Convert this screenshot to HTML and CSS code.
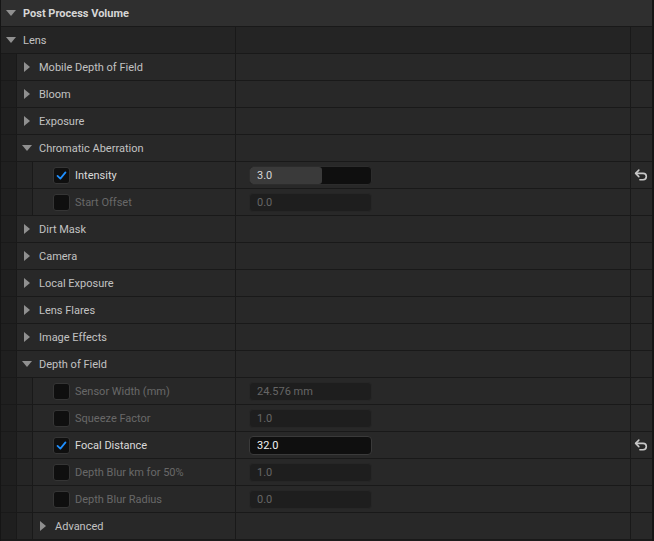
FILE: index.html
```html
<!DOCTYPE html>
<html lang="en">
<head>
    <meta charset="UTF-8">
    <title>Details - Post Process Volume</title>
    <link rel="stylesheet" href="styles.css">
</head>
<body>
<div class="panel">

    <!-- Section header -->
    <div class="row header">
        <span class="arrow down"></span>
        <span class="label">Post Process Volume</span>
    </div>

    <!-- Lens category -->
    <div class="row cat">
        <div class="name lvl0"><span class="arrow down"></span><span class="label">Lens</span></div>
        <div class="value"></div>
        <div class="reset"></div>
    </div>

    <div class="row">
        <div class="name"><span class="indent"></span><span class="group"><span class="arrow right"></span><span class="label">Mobile Depth of Field</span></span></div>
        <div class="value"></div><div class="reset"></div>
    </div>
    <div class="row">
        <div class="name"><span class="indent"></span><span class="group"><span class="arrow right"></span><span class="label">Bloom</span></span></div>
        <div class="value"></div><div class="reset"></div>
    </div>
    <div class="row">
        <div class="name"><span class="indent"></span><span class="group"><span class="arrow right"></span><span class="label">Exposure</span></span></div>
        <div class="value"></div><div class="reset"></div>
    </div>
    <div class="row">
        <div class="name"><span class="indent"></span><span class="group"><span class="arrow down"></span><span class="label">Chromatic Aberration</span></span></div>
        <div class="value"></div><div class="reset"></div>
    </div>

    <!-- Chromatic Aberration props -->
    <div class="row">
        <div class="name"><span class="indent"></span><span class="indent inner"></span>
            <span class="prop"><span class="check on"><svg viewBox="0 0 17 17"><path d="M4 9 L7.2 12 L13 5"/></svg></span><span class="label bright">Intensity</span></span></div>
        <div class="value"><div class="field"><div class="fill" style="width:72px"></div><span>3.0</span></div></div>
        <div class="reset"><svg class="undo" viewBox="0 0 14 14"><path d="M4.5 2 L1.5 5 L4.5 8"/><path d="M2 5 H8.5 A3 3 0 0 1 8.5 11 H5.5"/></svg></div>
    </div>
    <div class="row">
        <div class="name"><span class="indent"></span><span class="indent inner"></span>
            <span class="prop"><span class="check"></span><span class="label dim">Start Offset</span></span></div>
        <div class="value"><div class="field off"><span>0.0</span></div></div>
        <div class="reset"></div>
    </div>

    <div class="row">
        <div class="name"><span class="indent"></span><span class="group"><span class="arrow right"></span><span class="label">Dirt Mask</span></span></div>
        <div class="value"></div><div class="reset"></div>
    </div>
    <div class="row">
        <div class="name"><span class="indent"></span><span class="group"><span class="arrow right"></span><span class="label">Camera</span></span></div>
        <div class="value"></div><div class="reset"></div>
    </div>
    <div class="row">
        <div class="name"><span class="indent"></span><span class="group"><span class="arrow right"></span><span class="label">Local Exposure</span></span></div>
        <div class="value"></div><div class="reset"></div>
    </div>
    <div class="row">
        <div class="name"><span class="indent"></span><span class="group"><span class="arrow right"></span><span class="label">Lens Flares</span></span></div>
        <div class="value"></div><div class="reset"></div>
    </div>
    <div class="row">
        <div class="name"><span class="indent"></span><span class="group"><span class="arrow right"></span><span class="label">Image Effects</span></span></div>
        <div class="value"></div><div class="reset"></div>
    </div>
    <div class="row">
        <div class="name"><span class="indent"></span><span class="group"><span class="arrow down"></span><span class="label">Depth of Field</span></span></div>
        <div class="value"></div><div class="reset"></div>
    </div>

    <!-- Depth of Field props -->
    <div class="row">
        <div class="name"><span class="indent"></span><span class="indent inner"></span>
            <span class="prop"><span class="check"></span><span class="label dim">Sensor Width (mm)</span></span></div>
        <div class="value"><div class="field off"><span>24.576 mm</span></div></div>
        <div class="reset"></div>
    </div>
    <div class="row">
        <div class="name"><span class="indent"></span><span class="indent inner"></span>
            <span class="prop"><span class="check"></span><span class="label dim">Squeeze Factor</span></span></div>
        <div class="value"><div class="field off"><span>1.0</span></div></div>
        <div class="reset"></div>
    </div>
    <div class="row">
        <div class="name"><span class="indent"></span><span class="indent inner"></span>
            <span class="prop"><span class="check on"><svg viewBox="0 0 17 17"><path d="M4 9 L7.2 12 L13 5"/></svg></span><span class="label bright">Focal Distance</span></span></div>
        <div class="value"><div class="field edit"><span>32.0</span></div></div>
        <div class="reset"><svg class="undo" viewBox="0 0 14 14"><path d="M4.5 2 L1.5 5 L4.5 8"/><path d="M2 5 H8.5 A3 3 0 0 1 8.5 11 H5.5"/></svg></div>
    </div>
    <div class="row">
        <div class="name"><span class="indent"></span><span class="indent inner"></span>
            <span class="prop"><span class="check"></span><span class="label dim">Depth Blur km for 50%</span></span></div>
        <div class="value"><div class="field off"><span>1.0</span></div></div>
        <div class="reset"></div>
    </div>
    <div class="row">
        <div class="name"><span class="indent"></span><span class="indent inner"></span>
            <span class="prop"><span class="check"></span><span class="label dim">Depth Blur Radius</span></span></div>
        <div class="value"><div class="field off"><span>0.0</span></div></div>
        <div class="reset"></div>
    </div>
    <div class="row">
        <div class="name"><span class="indent"></span><span class="indent inner"></span>
            <span class="group"><span class="arrow right"></span><span class="label">Advanced</span></span></div>
        <div class="value"></div><div class="reset"></div>
    </div>

</div>
</body>
</html>
```

FILE: styles.css
```css
body { margin: 0; background: #151515; font-family: Roboto, "Noto Sans", sans-serif; font-size: 11px; color: #c2c2c2; }
.panel { width: 654px; height: 541px; overflow: hidden; box-sizing: border-box; border-left: 1px solid #151515; border-right: 2px solid #151515; background: #1c1c1c; }

.row { display: flex; height: 26px; border-bottom: 1px solid #191919; background: #282828; }
.row.header { align-items: center; background: #2f2f2f; padding-left: 5px; font-weight: bold; color: #d6d6d6; }
.row.header .arrow { margin-right: 7px; }
.row.cat { background: #242424; }

.name { width: 235px; box-sizing: border-box; display: flex; align-items: stretch; border-right: 1px solid #191919; }
.value { flex: 1; display: flex; align-items: center; border-right: 1px solid #191919; }
.reset { width: 21px; display: flex; align-items: center; justify-content: center; }

.lvl0 { align-items: center; padding-left: 5px; }
.lvl0 .arrow { margin-right: 7px; }

.indent { width: 15px; border-right: 1px solid #191919; background: #1f1f1f; flex: none; }
.indent.inner { background: #252525; }

.group { display: flex; align-items: center; padding-left: 5px; }
.group .arrow { margin-right: 7px; }
.prop { display: flex; align-items: center; padding-left: 20px; }

.arrow { width: 10px; height: 10px; display: flex; align-items: center; justify-content: center; flex: none; }
.arrow::before { content: ""; display: block; }
.arrow.down::before { border-left: 5px solid transparent; border-right: 5px solid transparent; border-top: 6px solid #909090; }
.arrow.right::before { border-top: 5px solid transparent; border-bottom: 5px solid transparent; border-left: 6px solid #909090; }

.label { white-space: nowrap; }
.label.bright { color: #dadada; }
.label.dim { color: #686868; }

.check { width: 15px; height: 15px; border: 1px solid #353535; border-radius: 3px; background: #0f0f0f; margin-right: 5px; display: flex; }
.check svg { width: 15px; height: 15px; }
.check path { fill: none; stroke: #1f8fff; stroke-width: 2; stroke-linecap: round; stroke-linejoin: round; }

.field { position: relative; margin-left: 13px; width: 121px; height: 17px; border: 1px solid #2c2c2c; border-radius: 4px; background: #0f0f0f; display: flex; align-items: center; overflow: hidden; }
.field span { position: relative; padding-left: 7px; color: #d6d6d6; }
.field .fill { position: absolute; left: 0; top: 0; bottom: 0; background: #3a3a3a; border-radius: 3px; }
.field.off { background: #1e1e1e; border-color: #262626; }
.field.off span { color: #666; }
.field.edit { border-color: #3a3a3a; }
.field.edit span { color: #f2f2f2; }

.undo { width: 15px; height: 15px; }
.undo path { fill: none; stroke: #c8c8c8; stroke-width: 1.5; stroke-linecap: round; stroke-linejoin: round; }
```
